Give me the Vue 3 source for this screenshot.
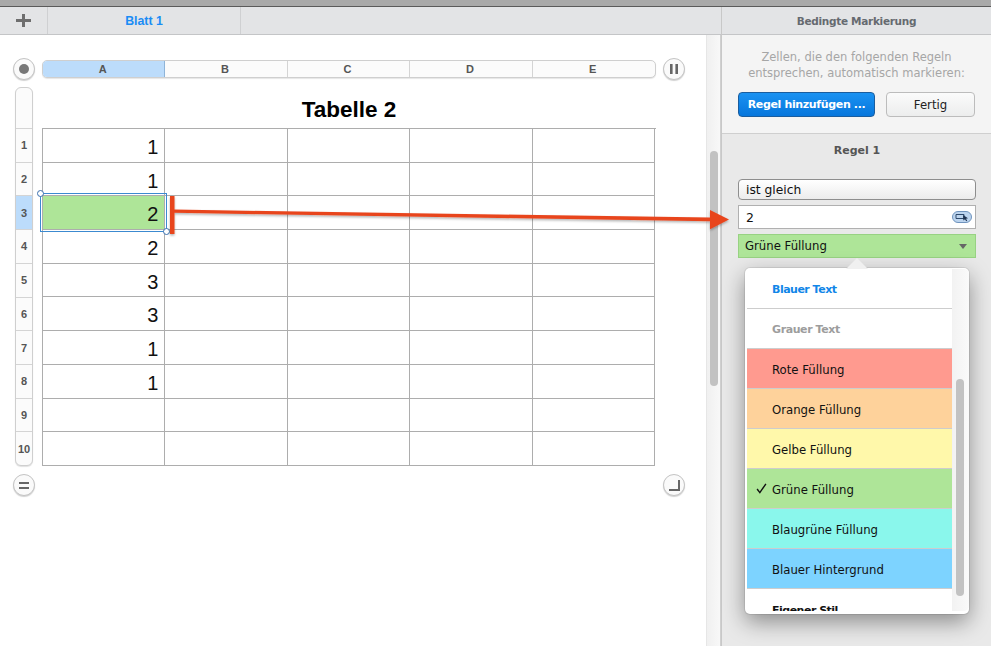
<script setup>
const columns = ['A', 'B', 'C', 'D', 'E']
const rows = [1, 1, 2, 2, 3, 3, 1, 1, '', '']
const styles = [
  { label: 'Blauer Text', cls: 'blue' },
  { label: 'Grauer Text', cls: 'gray' },
  { label: 'Rote Füllung', cls: 'red' },
  { label: 'Orange Füllung', cls: 'orange' },
  { label: 'Gelbe Füllung', cls: 'yellow' },
  { label: 'Grüne Füllung', cls: 'green', checked: true },
  { label: 'Blaugrüne Füllung', cls: 'teal' },
  { label: 'Blauer Hintergrund', cls: 'sky' },
  { label: 'Eigener Stil', cls: 'custom' }
]
</script>

<template>
  <div class="app">
    <div class="titlestrip"></div>
    <div class="main">
      <div class="left">
        <div class="tabbar">
          <div class="addtab">
            <svg width="15" height="13" viewBox="0 0 15 13"><path d="M6 0h3v5h6v3H9v5H6V8H0V5h6z" fill="#6e6e6e" /></svg>
          </div>
          <div class="tab">Blatt 1</div>
        </div>
        <div class="canvas">
          <div class="content">
            <div class="colrow">
              <div class="round"><span class="dot"></span></div>
              <div class="colheads">
                <div v-for="(c, i) in columns" :key="c" class="colhead" :class="{ on: i === 0 }">{{ c }}</div>
              </div>
              <div class="round">
                <svg width="8" height="10" viewBox="0 0 8 10"><path d="M0 0h2.6v10H0zM5.4 0H8v10H5.4z" fill="#666" /></svg>
              </div>
            </div>
            <div class="sheet">
              <div class="rowheads">
                <div class="rowtop"></div>
                <div v-for="(r, i) in rows" :key="i" class="rowhead" :class="{ on: i === 2 }">{{ i + 1 }}</div>
              </div>
              <div class="tablewrap">
                <div class="title">Tabelle 2</div>
                <div class="table">
                  <template v-for="(r, i) in rows" :key="i">
                    <div v-for="(c, j) in columns" :key="c" class="cell" :class="{ hit: i === 2 && j === 0 }">{{ j === 0 ? r : '' }}</div>
                  </template>
                  <div class="selection">
                    <span class="handle tl"></span>
                    <span class="handle br"></span>
                  </div>
                </div>
              </div>
            </div>
            <div class="footrow">
              <div class="round">
                <svg width="10" height="7" viewBox="0 0 10 7"><path d="M0 0h10v2H0zM0 5h10v2H0z" fill="#666" /></svg>
              </div>
              <div class="round">
                <svg width="11" height="11" viewBox="0 0 11 11"><path d="M9 0h2v11H0V9h9z" fill="#666" /></svg>
              </div>
            </div>
          </div>
          <div class="scrolltrack"><div class="scrollthumb"></div></div>
        </div>
      </div>

      <div class="side">
        <div class="sidehead">Bedingte Markierung</div>
        <div class="sideintro">
          <p class="hint">Zellen, die den folgenden Regeln<br />entsprechen, automatisch markieren:</p>
          <div class="buttons">
            <button class="btn primary">Regel hinzufügen ...</button>
            <button class="btn plain">Fertig</button>
          </div>
        </div>
        <div class="rule">
          <div class="ruletitle">Regel 1</div>
          <div class="field select">ist gleich</div>
          <div class="field input">
            <span>2</span>
            <svg width="20" height="12" viewBox="0 0 20 12">
              <rect x=".5" y=".5" width="19" height="11" rx="5.5" fill="#bcd4ee" stroke="#6f93bd" />
              <path d="M4 3.5h8v4H4z" fill="none" stroke="#2e4a6d" stroke-width="1" />
              <path d="M11 4l5 3.2-2 .5 1.2 2-1 .6-1.2-2-1.6 1.3z" fill="#1f3350" />
            </svg>
          </div>
          <div class="field chosen">
            <span>Grüne Füllung</span>
            <svg width="8" height="5" viewBox="0 0 8 5"><path d="M0 0h8L4 5z" fill="#666" /></svg>
          </div>
        </div>

        <div class="popup">
          <svg class="nub" width="22" height="11" viewBox="0 0 22 11"><path d="M0 11L11 0l11 11z" fill="#f0f0f0" /></svg>
          <div class="list">
            <div v-for="s in styles" :key="s.label" class="item" :class="s.cls">
              <svg v-if="s.checked" class="check" width="11" height="11" viewBox="0 0 10 10"><path d="M1 5.5l2.5 3.2L9 .8" fill="none" stroke="#111" stroke-width="1.3" /></svg>
              {{ s.label }}
            </div>
          </div>
          <div class="poptrack"><div class="popthumb"></div></div>
        </div>
      </div>
    </div>

    <svg class="callout" width="991" height="646" viewBox="0 0 991 646">
      <defs>
        <filter id="sh" x="-5%" y="-50%" width="110%" height="200%"><feDropShadow dx="0" dy="1.5" stdDeviation="1" flood-color="#000" flood-opacity=".3" /></filter>
      </defs>
      <g filter="url(#sh)" fill="#e8451d">
        <rect x="170" y="196" width="4.5" height="38" />
        <path d="M174 209.6L710 217.6v-7.6l19 9.6-19 9.6v-8L174 212.8z" />
      </g>
    </svg>
  </div>
</template>

<style>
html, body { margin: 0; background: #fff; }
</style>

<style scoped>
.app {
  position: relative;
  width: 991px;
  height: 646px;
  overflow: hidden;
  display: flex;
  flex-direction: column;
  font-family: "DejaVu Sans", sans-serif;
  background: #fff;
}
.titlestrip { height: 6px; background: #a9a9a9; border-bottom: 1px solid #5a5a5a; flex: none; }
.main { flex: 1; display: flex; min-height: 0; position: relative; }
.left { width: 721px; display: flex; flex-direction: column; }
.tabbar {
  height: 28px;
  box-sizing: border-box;
  flex: none;
  display: flex;
  background: #e3e4e6;
  border-bottom: 1px solid #c4c5c7;
}
.addtab {
  width: 48px;
  box-sizing: border-box;
  display: flex;
  align-items: center;
  justify-content: center;
  border-right: 1px solid #cfd0d2;
}
.tab {
  width: 193px;
  box-sizing: border-box;
  display: flex;
  align-items: center;
  justify-content: center;
  color: #1a8cf5;
  font: bold 12.3px "Liberation Sans", sans-serif;
  border-right: 1px solid #cfd0d2;
}
.canvas { flex: 1; display: flex; min-height: 0; }
.content { width: 706px; padding-top: 25px; box-sizing: border-box; }
.colrow { display: flex; align-items: center; padding-left: 13px; gap: 7px; height: 18px; }
.round {
  width: 22px;
  height: 22px;
  flex: none;
  box-sizing: border-box;
  border-radius: 50%;
  background: #fafafa;
  border: 1px solid #c4c4c4;
  box-shadow: 0 1px 1px rgba(0, 0, 0, .18);
  display: flex;
  align-items: center;
  justify-content: center;
}
.dot { width: 10px; height: 10px; border-radius: 50%; background: #777; }
.colheads {
  width: 614px;
  height: 18px;
  flex: none;
  display: grid;
  grid-template-columns: repeat(5, 122.4px);
  box-sizing: border-box;
  border: 1px solid #cfcfcf;
  border-radius: 5px;
  background: #fbfbfb;
  box-shadow: 0 1px 1px rgba(0, 0, 0, .1);
  overflow: hidden;
}
.colhead {
  box-sizing: border-box;
  display: flex;
  align-items: center;
  justify-content: center;
  padding-right: 2px;
  font: bold 11px "Liberation Sans", sans-serif;
  color: #555;
  border-right: 1px solid #d4d4d4;
}
.colhead:last-child { border-right: 0; }
.colhead.on { background: #bcdcfb; border-right-color: #8fb4d8; }
.sheet { display: flex; margin: 9px 0 0 15px; gap: 9px; }
.rowheads {
  width: 18px;
  height: 379px;
  box-sizing: border-box;
  border: 1px solid #cfcfcf;
  border-radius: 6px;
  background: #fbfbfb;
  box-shadow: 0 1px 1px rgba(0, 0, 0, .12);
  overflow: hidden;
  display: flex;
  flex-direction: column;
}
.rowtop { height: 40px; flex: none; }
.rowhead {
  flex: 1;
  display: flex;
  align-items: center;
  justify-content: center;
  font: bold 11px "Liberation Sans", sans-serif;
  color: #555;
  border-top: 1px solid #d4d4d4;
}
.rowhead.on { background: #bcdcfb; }
.tablewrap { width: 614px; }
.title {
  height: 41px;
  box-sizing: border-box;
  padding-top: 9px;
  text-align: center;
  font: bold 22.5px/27px "Liberation Sans", sans-serif;
  color: #000;
}
.table {
  position: relative;
  display: grid;
  grid-template-columns: repeat(5, 122.4px);
  grid-auto-rows: 33.7px;
  border-top: 1px solid #adadad;
  border-left: 1px solid #adadad;
  box-sizing: border-box;
  width: 614px;
}
.cell {
  border-right: 1px solid #adadad;
  border-bottom: 1px solid #adadad;
  box-sizing: border-box;
  text-align: right;
  padding: 5px 6px 0 0;
  font: 20px/26px "Liberation Sans", sans-serif;
  color: #111;
}
.cell.hit { background: #aee598; }
.selection {
  position: absolute;
  left: -3px;
  top: 64px;
  width: 127px;
  height: 39px;
  box-sizing: border-box;
  border: 1px solid #3c8ad0;
}
.handle {
  position: absolute;
  width: 7px;
  height: 7px;
  box-sizing: border-box;
  border: 1px solid #3a6fae;
  border-radius: 50%;
  background: #fff;
}
.handle.tl { left: -4px; top: -4px; }
.handle.br { right: -4px; bottom: -4px; }
.footrow {
  display: flex;
  justify-content: space-between;
  width: 672px;
  padding-left: 13px;
  margin-top: 8px;
}
.scrolltrack {
  width: 15px;
  box-sizing: border-box;
  background: linear-gradient(90deg, #f0f0f0, #f8f8f8);
  border-left: 1px solid #e6e6e6;
  border-right: 1px solid #d0d0d0;
  padding: 116px 0 0 3px;
}
.scrollthumb { width: 8px; height: 235px; border-radius: 4px; background: #c2c2c2; }

.side { width: 270px; flex: none; display: flex; flex-direction: column; position: relative; background: #e9e9e9; border-left: 1px solid #c8c8c8; box-sizing: border-box; }
.sidehead {
  height: 28px;
  flex: none;
  box-sizing: border-box;
  border-bottom: 1px solid #c4c5c7;
  background: #e3e4e6;
  display: flex;
  align-items: center;
  justify-content: center;
  font-size: 10.5px;
  letter-spacing: -.3px;
  font-weight: bold;
  color: #666a70;
}
.sideintro {
  height: 99px;
  flex: none;
  box-sizing: border-box;
  background: #f4f4f4;
  border-bottom: 1px solid #cfcfcf;
  padding: 14px 16px 0;
}
.hint {
  margin: 0;
  text-align: center;
  font-size: 11.5px;
  line-height: 16px;
  color: #a6a6a6;
  white-space: nowrap;
}
.buttons { display: flex; justify-content: space-between; margin-top: 11px; }
.btn {
  height: 25px;
  box-sizing: border-box;
  border-radius: 4px;
  font-family: "DejaVu Sans", sans-serif;
  font-size: 11px;
  padding: 0;
}
.primary {
  width: 137px;
  background: linear-gradient(#1a92f2, #0676dc);
  border: 1px solid #1a5d9e;
  color: #fff;
  font-weight: bold;
  letter-spacing: -.35px;
}
.plain {
  width: 89px;
  background: linear-gradient(#fbfbfb, #eceded);
  border: 1px solid #bcbcbc;
  color: #222;
  font-size: 11.7px;
}
.rule { padding: 0 15px 0 16px; }
.ruletitle {
  text-align: center;
  font-size: 11px;
  font-weight: bold;
  color: #555;
  padding-top: 10px;
  height: 45px;
  box-sizing: border-box;
  line-height: 14px;
}
.field {
  box-sizing: border-box;
  width: 238px;
  display: flex;
  align-items: center;
  justify-content: space-between;
  font-size: 11.7px;
  color: #111;
}
.select {
  height: 21px;
  border: 1px solid #8e8e8e;
  border-radius: 4px;
  padding-left: 7px;
  font-size: 12.3px;
  background: linear-gradient(#fff, #ececec);
}
.input {
  height: 24px;
  margin-top: 5px;
  border: 1px solid #b0b0b0;
  background: #fff;
  padding: 0 3px 0 7px;
  font-size: 12.5px;
}
.chosen {
  height: 24px;
  margin-top: 5px;
  border: 1px solid #98d283;
  background: #aee598;
  padding: 0 8px 0 6px;
}
.popup {
  position: absolute;
  left: 23px;
  top: 261px;
  width: 224px;
  height: 346px;
  box-sizing: border-box;
  display: flex;
  background: #fff;
  border-radius: 5px;
  padding: 1px 0 3px 2px;
  box-shadow: 0 0 0 1px rgba(0, 0, 0, .08), 0 8px 22px rgba(0, 0, 0, .4);
}
.nub { position: absolute; left: 101px; top: -10px; }
.list { width: 205px; height: 342px; overflow: hidden; flex: none; }
.item {
  height: 40px;
  box-sizing: border-box;
  position: relative;
  border-bottom: 1px solid #cdcdcd;
  padding: 2px 0 0 25px;
  display: flex;
  align-items: center;
  font-size: 11.7px;
  color: #111;
}
.check { position: absolute; left: 9px; top: 14px; }
.blue { color: #1186e8; font-weight: bold; font-size: 11px; letter-spacing: -.5px; }
.gray { color: #9d9d9d; font-weight: bold; font-size: 11px; letter-spacing: -.4px; }
.red { background: #ff9a8f; }
.orange { background: #fed29b; }
.yellow { background: #fff8aa; }
.green { background: #aee598; }
.teal { background: #8af7ec; }
.sky { background: #7dd3ff; }
.custom { font-weight: bold; font-size: 11px; letter-spacing: -.5px; border-bottom: 0; }
.poptrack {
  flex: 1;
  background: linear-gradient(90deg, #f2f2f2, #fafafa);
  padding: 110px 0 0 4px;
  border-radius: 0 5px 5px 0;
}
.popthumb { width: 8px; height: 217px; border-radius: 4px; background: #c2c2c2; }
.callout { position: absolute; left: 0; top: 0; pointer-events: none; }
</style>
